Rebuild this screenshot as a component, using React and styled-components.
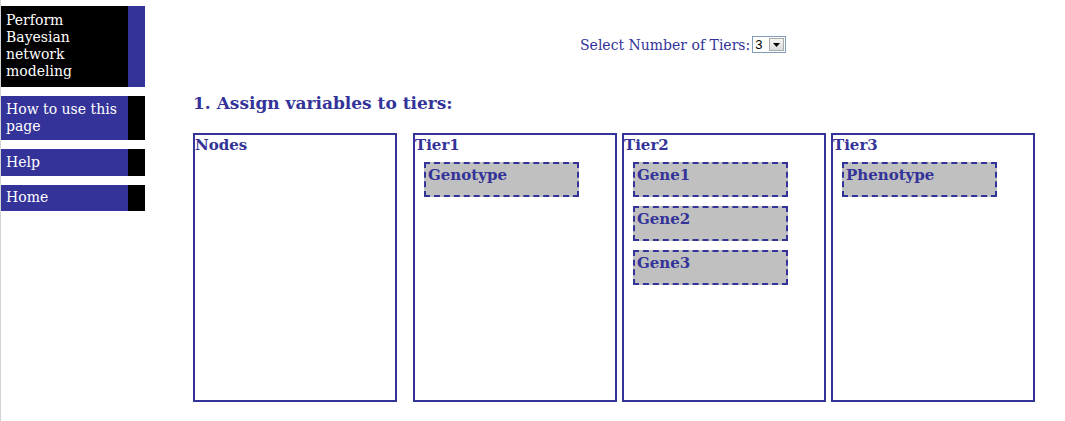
import React from "react";
import styled, { createGlobalStyle } from "styled-components";

const Global = createGlobalStyle`
  html, body { margin: 0; padding: 0; background: #fff; }
  body { font-family: "DejaVu Serif", Georgia, serif; }
`;

const BLUE = "#333399";

const Page = styled.div`
  display: flex;
  min-height: 100vh;
  border-left: 1px solid #d4d4d4;
`;

const Sidebar = styled.nav`
  width: 144px;
  flex: none;
  padding-top: 6px;
  display: flex;
  flex-direction: column;
  gap: 9px;
`;

const NavItem = styled.a`
  display: flex;
  text-decoration: none;
  color: #fff;
  font-size: 14px;
  line-height: 17px;
`;

const NavLabel = styled.span`
  width: 122px;
  padding: ${(p) => p.$pad || "5px 0 5px 5px"};
  background: ${(p) => (p.$title ? "#000" : BLUE)};
`;

const NavAccent = styled.span`
  width: 17px;
  background: ${(p) => (p.$title ? BLUE : "#000")};
`;

const Main = styled.main`
  flex: 1;
  padding-left: 48px;
`;

const TopBar = styled.div`
  display: flex;
  align-items: center;
  gap: 2px;
  padding: 36px 0 0 387px;
  color: ${BLUE};
  font-size: 14px;
`;

const FakeSelect = styled.span`
  display: inline-flex;
  align-items: stretch;
  height: 17px;
  border: 1px solid #7f9db9;
  background: #fff;
  box-sizing: border-box;
  font-family: "Liberation Sans", Arial, sans-serif;
  font-size: 13px;
  color: #000;
`;

const SelectValue = styled.span`
  width: 13px;
  padding-left: 2px;
  line-height: 15px;
`;

const SelectArrow = styled.span`
  width: 15px;
  margin: 1px;
  background: linear-gradient(#f4f4f4, #dcdcdc);
  border: 1px solid #aaa;
  box-sizing: border-box;
  display: flex;
  align-items: center;
  justify-content: center;
`;

const Heading = styled.h2`
  margin: 39px 0 0;
  font-size: 17px;
  line-height: 22px;
  font-weight: bold;
  color: ${BLUE};
`;

const Board = styled.div`
  display: flex;
  margin-top: 19px;
`;

const Column = styled.section`
  width: 204px;
  height: 269px;
  box-sizing: border-box;
  border: 2px solid ${BLUE};
  margin-left: ${(p) => p.$gap || 0}px;
  color: ${BLUE};
`;

const ColumnTitle = styled.div`
  font-weight: bold;
  font-size: 15px;
  line-height: 18px;
  padding-top: 1px;
  margin-bottom: 8px;
`;

const Cards = styled.div`
  display: flex;
  flex-direction: column;
  gap: 9px;
  padding-left: 9px;
`;

const Card = styled.div`
  width: 155px;
  height: 35px;
  box-sizing: border-box;
  background: #c0c0c0;
  border: 2px dashed ${BLUE};
  font-weight: bold;
  font-size: 15px;
  line-height: 18px;
  padding: 2px 0 0 2px;
`;

const tiers = [
  { name: "Nodes", items: [], gap: 0 },
  { name: "Tier1", items: ["Genotype"], gap: 16 },
  { name: "Tier2", items: ["Gene1", "Gene2", "Gene3"], gap: 5 },
  { name: "Tier3", items: ["Phenotype"], gap: 5 },
];

export default function App() {
  return (
    <>
      <Global />
      <Page>
        <Sidebar>
          <NavItem href="#">
            <NavLabel $title $pad="6px 0 7px 5px">Perform Bayesian network modeling</NavLabel>
            <NavAccent $title />
          </NavItem>
          <NavItem href="#">
            <NavLabel>How to use this page</NavLabel>
            <NavAccent />
          </NavItem>
          <NavItem href="#">
            <NavLabel>Help</NavLabel>
            <NavAccent />
          </NavItem>
          <NavItem href="#">
            <NavLabel $pad="4px 0 5px 5px">Home</NavLabel>
            <NavAccent />
          </NavItem>
        </Sidebar>
        <Main>
          <TopBar>
            <span>Select Number of Tiers:</span>
            <FakeSelect>
              <SelectValue>3</SelectValue>
              <SelectArrow>
                <svg width="7" height="4" viewBox="0 0 7 4">
                  <path d="M0 0h7L3.5 4z" fill="#000" />
                </svg>
              </SelectArrow>
            </FakeSelect>
          </TopBar>
          <Heading>1. Assign variables to tiers:</Heading>
          <Board>
            {tiers.map((t) => (
              <Column key={t.name} $gap={t.gap}>
                <ColumnTitle>{t.name}</ColumnTitle>
                <Cards>
                  {t.items.map((i) => (
                    <Card key={i}>{i}</Card>
                  ))}
                </Cards>
              </Column>
            ))}
          </Board>
        </Main>
      </Page>
    </>
  );
}
